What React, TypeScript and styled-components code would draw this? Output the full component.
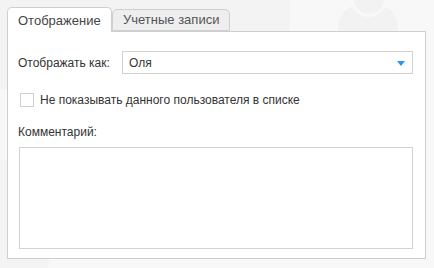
import React from "react";
import styled, { createGlobalStyle } from "styled-components";

const Global = createGlobalStyle`
  html, body { margin: 0; padding: 0; }
  body {
    background: #f8f8f8;
    font-family: "Liberation Sans", Arial, sans-serif;
    width: 434px;
    height: 268px;
    overflow: hidden;
  }
`;

const Stage = styled.div`
  position: relative;
  width: 434px;
  height: 268px;
  padding: 7px 0 0 7px;
  box-sizing: border-box;
  overflow: hidden;
`;

const BgBlob = styled.div`
  position: absolute;
  left: -40px;
  top: -60px;
  width: 330px;
  height: 150px;
  border-radius: 0 0 40px 0;
  background: #f3f3f3;
`;

const BgHead = styled.div`
  position: absolute;
  left: 354px;
  top: -16px;
  width: 30px;
  height: 30px;
  border-radius: 50%;
  background: #f2f2f2;
  box-shadow: 0 0 0 3px #f8f8f8;
`;

const BgBody = styled.div`
  position: absolute;
  left: 338px;
  top: 5px;
  width: 60px;
  height: 60px;
  border-radius: 22px 22px 0 0;
  background: #f2f2f2;
`;

const BgCorner = styled.div`
  position: absolute;
  left: -80px;
  top: 160px;
  width: 140px;
  height: 140px;
  background: #f4f4f4;
  transform: skewX(-18deg);
`;

const Content = styled.div`
  position: relative;
  width: 419px;
  display: flex;
  flex-direction: column;
`;

const TabBar = styled.div`
  display: flex;
  align-items: flex-end;
  height: 24px;
`;

const Tab = styled.div<{ $active?: boolean }>`
  box-sizing: border-box;
  height: ${(p) => (p.$active ? "25px" : "22px")};
  margin-bottom: ${(p) => (p.$active ? "-1px" : "0")};
  padding: 0 10px;
  width: ${(p) => (p.$active ? "105px" : "118px")};
  border: 1px solid #cfcfcf;
  border-bottom: ${(p) => (p.$active ? "none" : "1px solid #cfcfcf")};
  border-radius: 5px 5px 0 0;
  background: ${(p) => (p.$active ? "#ffffff" : "#eeeeee")};
  color: ${(p) => (p.$active ? "#444" : "#555")};
  font-size: 13px;
  line-height: ${(p) => (p.$active ? "22px" : "20px")};
  padding-top: ${(p) => (p.$active ? "2px" : "0")};
  white-space: nowrap;
  position: relative;
  z-index: ${(p) => (p.$active ? 1 : 0)};
`;

const Panel = styled.div`
  box-sizing: border-box;
  height: 228px;
  border: 1px solid #cfcfcf;
  background: #fff;
  padding: 19px 12px 9px 10px;
  display: flex;
  flex-direction: column;
`;

const FieldRow = styled.div`
  display: flex;
  align-items: center;
`;

const Label = styled.div<{ $width?: number }>`
  font-size: 12px;
  color: #333;
  width: ${(p) => (p.$width ? `${p.$width}px` : "auto")};
  flex-shrink: 0;
`;

const Select = styled.div`
  flex: 1;
  box-sizing: border-box;
  height: 23px;
  border: 1px solid #d2d2d2;
  display: flex;
  align-items: center;
  justify-content: space-between;
  padding: 0 7px 0 6px;
  font-size: 12px;
  color: #333;
`;

const Arrow = styled.svg`
  display: block;
  margin-top: 1px;
`;

const CheckRow = styled.label`
  display: flex;
  align-items: center;
  margin-top: 19px;
  padding-left: 2px;
  gap: 6px;
  font-size: 12px;
  color: #333;
`;

const Box = styled.span`
  box-sizing: border-box;
  width: 14px;
  height: 14px;
  border: 1px solid #cfcfcf;
  background: #fff;
`;

const CommentLabel = styled(Label)`
  margin-top: 18px;
`;

const TextArea = styled.div`
  box-sizing: border-box;
  margin-top: 8px;
  margin-left: 1px;
  height: 102px;
  border: 1px solid #d2d2d2;
  background: #fff;
`;

export default function App() {
  return (
    <>
      <Global />
      <Stage>
        <BgBlob />
        <BgBody />
        <BgHead />
        <BgCorner />
        <Content>
          <TabBar>
            <Tab $active>Отображение</Tab>
            <Tab>Учетные записи</Tab>
          </TabBar>
          <Panel>
            <FieldRow>
              <Label $width={104}>Отображать как:</Label>
              <Select>
                <span>Оля</span>
                <Arrow width="8" height="5" viewBox="0 0 8 5">
                  <path d="M0 0 H8 L4 5 Z" fill="#2a96f0" />
                </Arrow>
              </Select>
            </FieldRow>
            <CheckRow>
              <Box />
              <span>Не показывать данного пользователя в списке</span>
            </CheckRow>
            <CommentLabel>Комментарий:</CommentLabel>
            <TextArea />
          </Panel>
        </Content>
      </Stage>
    </>
  );
}
